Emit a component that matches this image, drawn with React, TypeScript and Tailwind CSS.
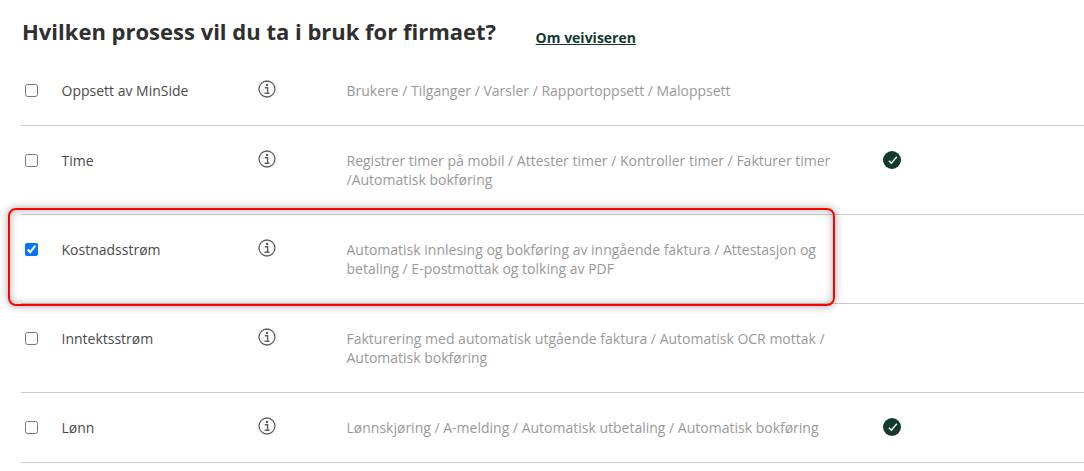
const rows = [
  { name: "Oppsett av MinSide", desc: ["Brukere / Tilganger / Varsler / Rapportoppsett / Maloppsett"], h: "h-[70px]", done: false, checked: false },
  { name: "Time", desc: ["Registrer timer på mobil / Attester timer / Kontroller timer / Fakturer timer", "/Automatisk bokføring"], h: "h-[89px]", done: true, checked: false },
  { name: "Kostnadsstrøm", desc: ["Automatisk innlesing og bokføring av inngående faktura / Attestasjon og", "betaling / E-postmottak og tolking av PDF"], h: "h-[89px]", done: false, checked: true },
  { name: "Inntektsstrøm", desc: ["Fakturering med automatisk utgående faktura / Automatisk OCR mottak /", "Automatisk bokføring"], h: "h-[89px]", done: false, checked: false },
  { name: "Lønn", desc: ["Lønnskjøring / A-melding / Automatisk utbetaling / Automatisk bokføring"], h: "h-[70px]", done: true, checked: false },
];

function InfoIcon() {
  return (
    <svg width="18" height="18" viewBox="0 0 18 18" fill="none" className="block">
      <circle cx="9" cy="9" r="8" stroke="#5f5f5f" strokeWidth="1.3" />
      <circle cx="9" cy="5" r="1.25" fill="#5f5f5f" />
      <path d="M6.8 7.8h2.8v5.2M6.6 13.3h4.8" stroke="#5f5f5f" strokeWidth="1.4" />
    </svg>
  );
}

function DoneIcon() {
  return (
    <svg width="18" height="18" viewBox="0 0 18 18" className="block">
      <circle cx="9" cy="9" r="9" fill="#123a2f" />
      <path d="M6 9.7l2.3 2.6L13.9 5.7" fill="none" stroke="#fff" strokeWidth="1.4" />
    </svg>
  );
}

export default function App() {
  return (
    <div className="relative h-[471px] w-[1084px] overflow-hidden bg-white pl-[21px] font-['Open_Sans',sans-serif]">
      <div className="flex h-[56px] items-start pt-[14px]">
        <h1 className="pl-[1px] text-[22px] leading-[34px] font-bold text-[#2f2f2f]">Hvilken prosess vil du ta i bruk for firmaet?</h1>
        <a className="ml-[39.5px] mt-[14px] text-[14px] leading-[20px] font-bold text-[#123a2f] underline">Om veiviseren</a>
      </div>
      {rows.map((r) => (
        <div key={r.name} className={`flex border-b border-[#cccccc] ${r.h} pt-[25px] box-border`}>
          <div className="w-[40.5px] pl-[4px] pt-[3px]">
            <input type="checkbox" readOnly checked={r.checked} className="m-0 block h-[13px] w-[13px]" />
          </div>
          <div className="w-[196.5px] text-[14px] leading-[20px] text-[#4a4a4a]">{r.name}</div>
          <div className="w-[88.5px] -mt-[1px]"><InfoIcon /></div>
          <div className="w-[536.5px] text-[14px] leading-[19px] text-[#999999]">
            {r.desc.map((d) => <div key={d} className="whitespace-nowrap">{d}</div>)}
          </div>
          {r.done && <div><DoneIcon /></div>}
        </div>
      ))}
      <div className="absolute left-[8px] top-[208px] h-[98px] w-[827px] rounded-[8px] border-2 border-[#ff0000] shadow-[0_0_8px_rgba(0,0,0,0.35),inset_0_0_8px_rgba(0,0,0,0.3)]" />
    </div>
  );
}
